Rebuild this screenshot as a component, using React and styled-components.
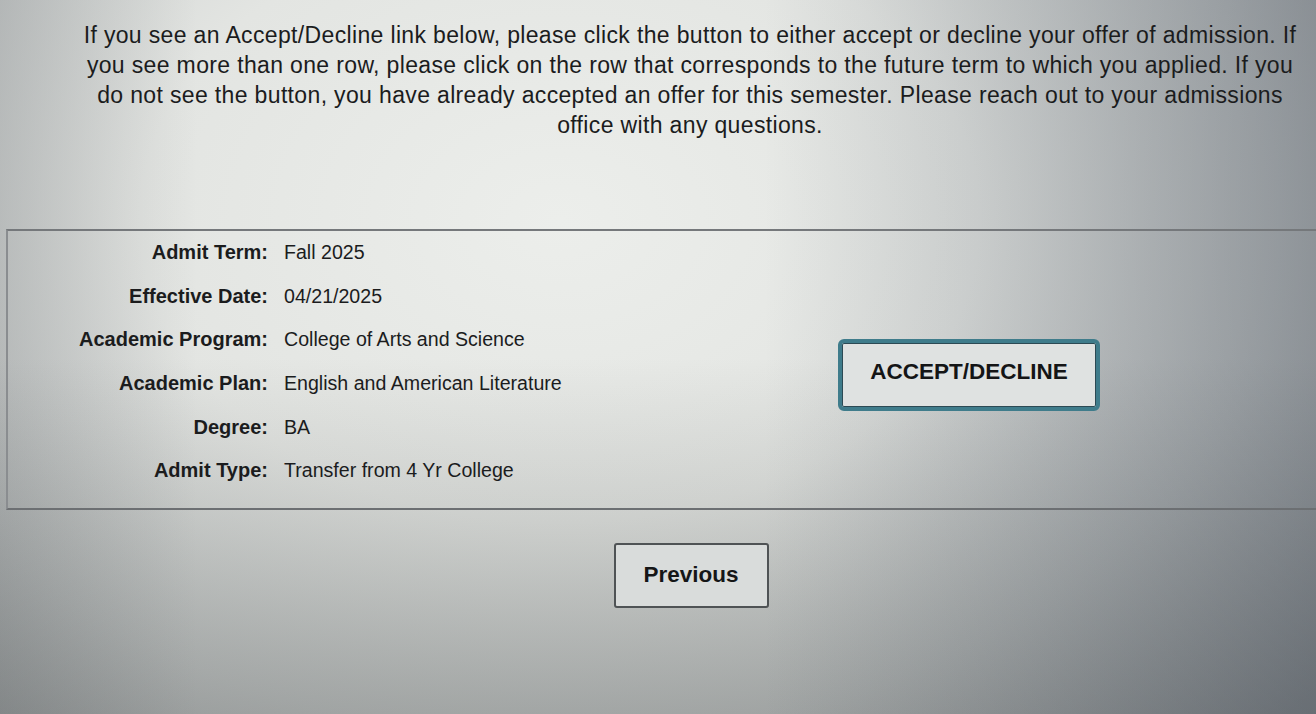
import React from 'react';
import styled, { createGlobalStyle } from 'styled-components';

const GlobalStyle = createGlobalStyle`
  html, body {
    margin: 0;
    padding: 0;
  }
  body {
    font-family: 'Liberation Sans', Arial, sans-serif;
    color: #1b1c1d;
  }
`;

const fields = [
  { label: 'Admit Term:', value: 'Fall 2025' },
  { label: 'Effective Date:', value: '04/21/2025' },
  { label: 'Academic Program:', value: 'College of Arts and Science' },
  { label: 'Academic Plan:', value: 'English and American Literature' },
  { label: 'Degree:', value: 'BA' },
  { label: 'Admit Type:', value: 'Transfer from 4 Yr College' },
];

const App = () => {
  return (
    <>
      <GlobalStyle />
      <Page>
        <Intro>
          If you see an Accept/Decline link below, please click the button to either accept or decline your offer of admission. If
          <br />
          you see more than one row, please click on the row that corresponds to the future term to which you applied. If you
          <br />
          do not see the button, you have already accepted an offer for this semester. Please reach out to your admissions
          <br />
          office with any questions.
        </Intro>

        <AdmitSection>
          <Fields>
            {fields.map((f) => (
              <React.Fragment key={f.label}>
                <FieldLabel>{f.label}</FieldLabel>
                <FieldValue>{f.value}</FieldValue>
              </React.Fragment>
            ))}
          </Fields>
          <Actions>
            <AcceptButton type="button">ACCEPT/DECLINE</AcceptButton>
          </Actions>
        </AdmitSection>

        <Footer>
          <NavButton type="button">Previous</NavButton>
        </Footer>
      </Page>
    </>
  );
};

export default App;

const Page = styled.div`
  width: 1316px;
  height: 714px;
  overflow: hidden;
  background:
    linear-gradient(to right, rgba(40, 50, 65, 0) 58%, rgba(40, 50, 65, 0.36) 100%),
    linear-gradient(to bottom, rgba(50, 55, 55, 0) 50%, rgba(50, 55, 55, 0.28) 100%),
    linear-gradient(to right, rgba(90, 95, 100, 0.25) 0%, rgba(90, 95, 100, 0) 15%),
    radial-gradient(ellipse 1000px 720px at 560px 220px, #eceeeb 0%, #e3e5e2 42%, #cbcecd 72%, #b0b3b4 100%);
`;

const Intro = styled.p`
  margin: 0;
  padding: 20px 8px 0 72px;
  font-size: 23px;
  letter-spacing: 0.35px;
  line-height: 30px;
  text-align: center;
  white-space: nowrap;
`;

const AdmitSection = styled.section`
  display: flex;
  margin: 89px 0 0 6px;
  border-top: 2px solid #75787b;
  border-left: 2px solid #8a8d90;
  border-bottom: 2px solid #6c6f72;
  padding-bottom: 15px;
`;

const Fields = styled.div`
  display: grid;
  grid-template-columns: 260px 554px;
  column-gap: 16px;
  grid-auto-rows: 43.6px;
  align-items: center;
`;

const FieldLabel = styled.div`
  text-align: right;
  font-size: 20px;
  font-weight: 700;
`;

const FieldValue = styled.div`
  font-size: 19.6px;
`;

const Actions = styled.div`
  padding-top: 108px;
`;

const AcceptButton = styled.button`
  width: 262px;
  height: 72px;
  padding: 0 0 6px;
  border: 4px solid #3f7c8b;
  border-radius: 6px;
  box-shadow: inset 0 0 0 1px #2c4a54;
  background: #dfe2e1;
  font-family: 'Liberation Sans', Arial, sans-serif;
  font-size: 22.5px;
  font-weight: 700;
  color: #141516;
`;

const Footer = styled.div`
  display: flex;
  justify-content: center;
  padding: 33px 0 0 66px;
`;

const NavButton = styled.button`
  width: 155px;
  height: 65px;
  border: 2px solid #4f5355;
  border-radius: 3px;
  background: #d9dcdb;
  font-family: 'Liberation Sans', Arial, sans-serif;
  font-size: 22.5px;
  font-weight: 700;
  color: #151617;
`;
